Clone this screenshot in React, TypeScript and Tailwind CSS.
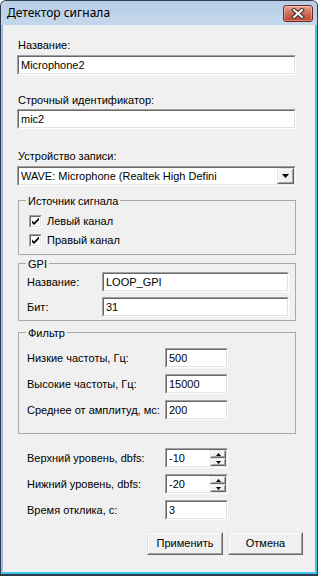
import { clsx } from "clsx";
import type { ReactNode } from "react";

function Sunken({ className, children }: { className?: string; children?: ReactNode }) {
  return (
    <div className={clsx("border border-t-[#a0a0a0] border-l-[#a0a0a0] border-b-white border-r-white", className)}>
      <div className="flex h-full items-center border border-t-[#696969] border-l-[#696969] border-b-[#e3e3e3] border-r-[#e3e3e3] bg-white">
        {children}
      </div>
    </div>
  );
}

function Raised({ className, children }: { className?: string; children?: ReactNode }) {
  return (
    <div className={clsx("border border-t-[#e3e3e3] border-l-[#e3e3e3] border-b-[#696969] border-r-[#696969]", className)}>
      <div className="flex h-full items-center justify-center border border-t-white border-l-white border-b-[#a0a0a0] border-r-[#a0a0a0] bg-[#f0f0f0]">
        {children}
      </div>
    </div>
  );
}

function TextBox({ value, className }: { value: string; className?: string }) {
  return (
    <Sunken className={clsx("h-[20px]", className)}>
      <span className="overflow-hidden whitespace-nowrap pl-[2px]">{value}</span>
    </Sunken>
  );
}

function Arrow({ up, w = 5, h = 3 }: { up?: boolean; w?: number; h?: number }) {
  return (
    <svg width={w} height={h} viewBox={`0 0 ${w} ${h}`}>
      <path d={up ? `M0 ${h}L${w / 2} 0L${w} ${h}Z` : `M0 0L${w} 0L${w / 2} ${h}Z`} fill="#000" />
    </svg>
  );
}

function SpinBox({ value }: { value: string }) {
  return (
    <Sunken className="h-[20px] w-[63px]">
      <span className="flex-1 pl-[2px]">{value}</span>
      <div className="flex h-full w-[16px] flex-col">
        <Raised className="h-1/2">
          <Arrow up />
        </Raised>
        <Raised className="h-1/2">
          <Arrow />
        </Raised>
      </div>
    </Sunken>
  );
}

function CheckBox({ label }: { label: string }) {
  return (
    <div className="flex h-[13px] items-center pl-[10px]">
      <Sunken className="h-[13px] w-[13px]">
        <svg width="9" height="9" viewBox="0 0 9 9">
          <path d="M1 3.5L3 5.5L8 0.5V3L3 8L1 6Z" fill="#000" />
        </svg>
      </Sunken>
      <span className="ml-[5px]">{label}</span>
    </div>
  );
}

function Group({ title, className, children }: { title: string; className?: string; children?: ReactNode }) {
  return (
    <fieldset className={clsx("ml-px w-[278px] border border-[#a9a9a9]", className)}>
      <legend className="ml-[7px] px-[2px] pt-[3px] leading-[11px]">{title}</legend>
      {children}
    </fieldset>
  );
}

function Row({ label, labelW, className, children }: { label: string; labelW: string; className?: string; children: ReactNode }) {
  return (
    <div className={clsx("flex h-[20px] items-center", className)}>
      <span className={clsx("whitespace-nowrap", labelW)}>{label}</span>
      {children}
    </div>
  );
}

export default function App() {
  return (
    <div className="h-[576px] w-[318px] bg-white font-['Liberation_Sans',Arial,sans-serif] text-[11px] text-black">
      <div className="flex h-full w-full flex-col rounded-t-[6px] border border-b-2 border-[#2d3b4b] bg-[#bcd0e8]">
        {/* Title bar */}
        <div className="flex h-[24px] shrink-0 items-center justify-between rounded-t-[5px] bg-gradient-to-b from-[#b7cce6] to-[#c4d7ec] pl-[6px] pr-[4px]">
          <span className="font-['Noto_Sans',sans-serif] text-[12px] leading-[16px]">Детектор сигнала</span>
          <div className="mb-[3px] flex h-[17px] w-[30px] items-center justify-center self-end rounded-[3px] border border-[#6b2b23] bg-gradient-to-b from-[#e6a597] via-[#d06b57] to-[#c0442f] shadow-[inset_0_0_0_1px_rgba(255,255,255,0.35)]">
            <svg width="14" height="11" viewBox="0 0 14 11">
              <path d="M3 2L11 9M11 2L3 9" stroke="#3d2a2a" strokeWidth="4" strokeLinecap="square" />
              <path d="M3 2L11 9M11 2L3 9" stroke="#fff" strokeWidth="2" strokeLinecap="square" />
            </svg>
          </div>
        </div>

        {/* Client area */}
        <div className="flex-1 border-b-2 border-l-2 border-r-2 border-b-[#3bc4ee] border-l-[#9dbbe0] border-r-[#3bc4ee] bg-[#f0f0f0] pl-[14px]">
          <div className="mt-[14px] ml-px h-[13px] leading-[13px]">Название:</div>
          <TextBox value="Microphone2" className="mt-[3px] w-[279px]" />

          <div className="mt-[19px] ml-px h-[13px] leading-[13px]">Строчный идентификатор:</div>
          <TextBox value="mic2" className="mt-[2px] w-[279px]" />

          <div className="mt-[21px] ml-px h-[13px] leading-[13px]">Устройство записи:</div>
          <Sunken className="mt-[3px] h-[20px] w-[279px]">
            <span className="flex-1 overflow-hidden whitespace-nowrap pl-[2px]">WAVE: Microphone (Realtek High Defini</span>
            <Raised className="h-full w-[17px]">
              <Arrow w={7} h={4} />
            </Raised>
          </Sunken>

          <Group title="Источник сигнала" className="mt-[7px] pb-[7px]">
            <div className="mt-[8px]">
              <CheckBox label="Левый канал" />
            </div>
            <div className="mt-[6px]">
              <CheckBox label="Правый канал" />
            </div>
          </Group>

          <Group title="GPI" className="mt-[1px] pb-[3px]">
            <Row label="Название:" labelW="w-[75px]" className="mt-[2px] pl-[8px]">
              <TextBox value="LOOP_GPI" className="w-[187px]" />
            </Row>
            <Row label="Бит:" labelW="w-[75px]" className="mt-[5px] pl-[8px]">
              <TextBox value="31" className="w-[187px]" />
            </Row>
          </Group>

          <Group title="Фильтр" className="mt-[4px] pb-[13px]">
            <Row label="Низкие частоты, Гц:" labelW="w-[138px]" className="mt-[9px] pl-[8px]">
              <TextBox value="500" className="w-[63px]" />
            </Row>
            <Row label="Высокие частоты, Гц:" labelW="w-[138px]" className="mt-[6px] pl-[8px]">
              <TextBox value="15000" className="w-[63px]" />
            </Row>
            <Row label="Среднее от амплитуд, мс:" labelW="w-[138px]" className="mt-[6px] pl-[8px]">
              <TextBox value="200" className="w-[63px]" />
            </Row>
          </Group>

          <Row label="Верхний уровень, dbfs:" labelW="w-[138px]" className="mt-[14px] pl-[10px]">
            <SpinBox value="-10" />
          </Row>
          <Row label="Нижний уровень, dbfs:" labelW="w-[138px]" className="mt-[6px] pl-[10px]">
            <SpinBox value="-20" />
          </Row>
          <Row label="Время отклика, с:" labelW="w-[138px]" className="mt-[6px] pl-[10px]">
            <TextBox value="3" className="w-[63px]" />
          </Row>

          <div className="mt-[12px] ml-[130px] flex gap-[5px]">
            <Raised className="h-[23px] w-[76px]">Применить</Raised>
            <Raised className="h-[23px] w-[75px]">Отмена</Raised>
          </div>
        </div>
      </div>
    </div>
  );
}
